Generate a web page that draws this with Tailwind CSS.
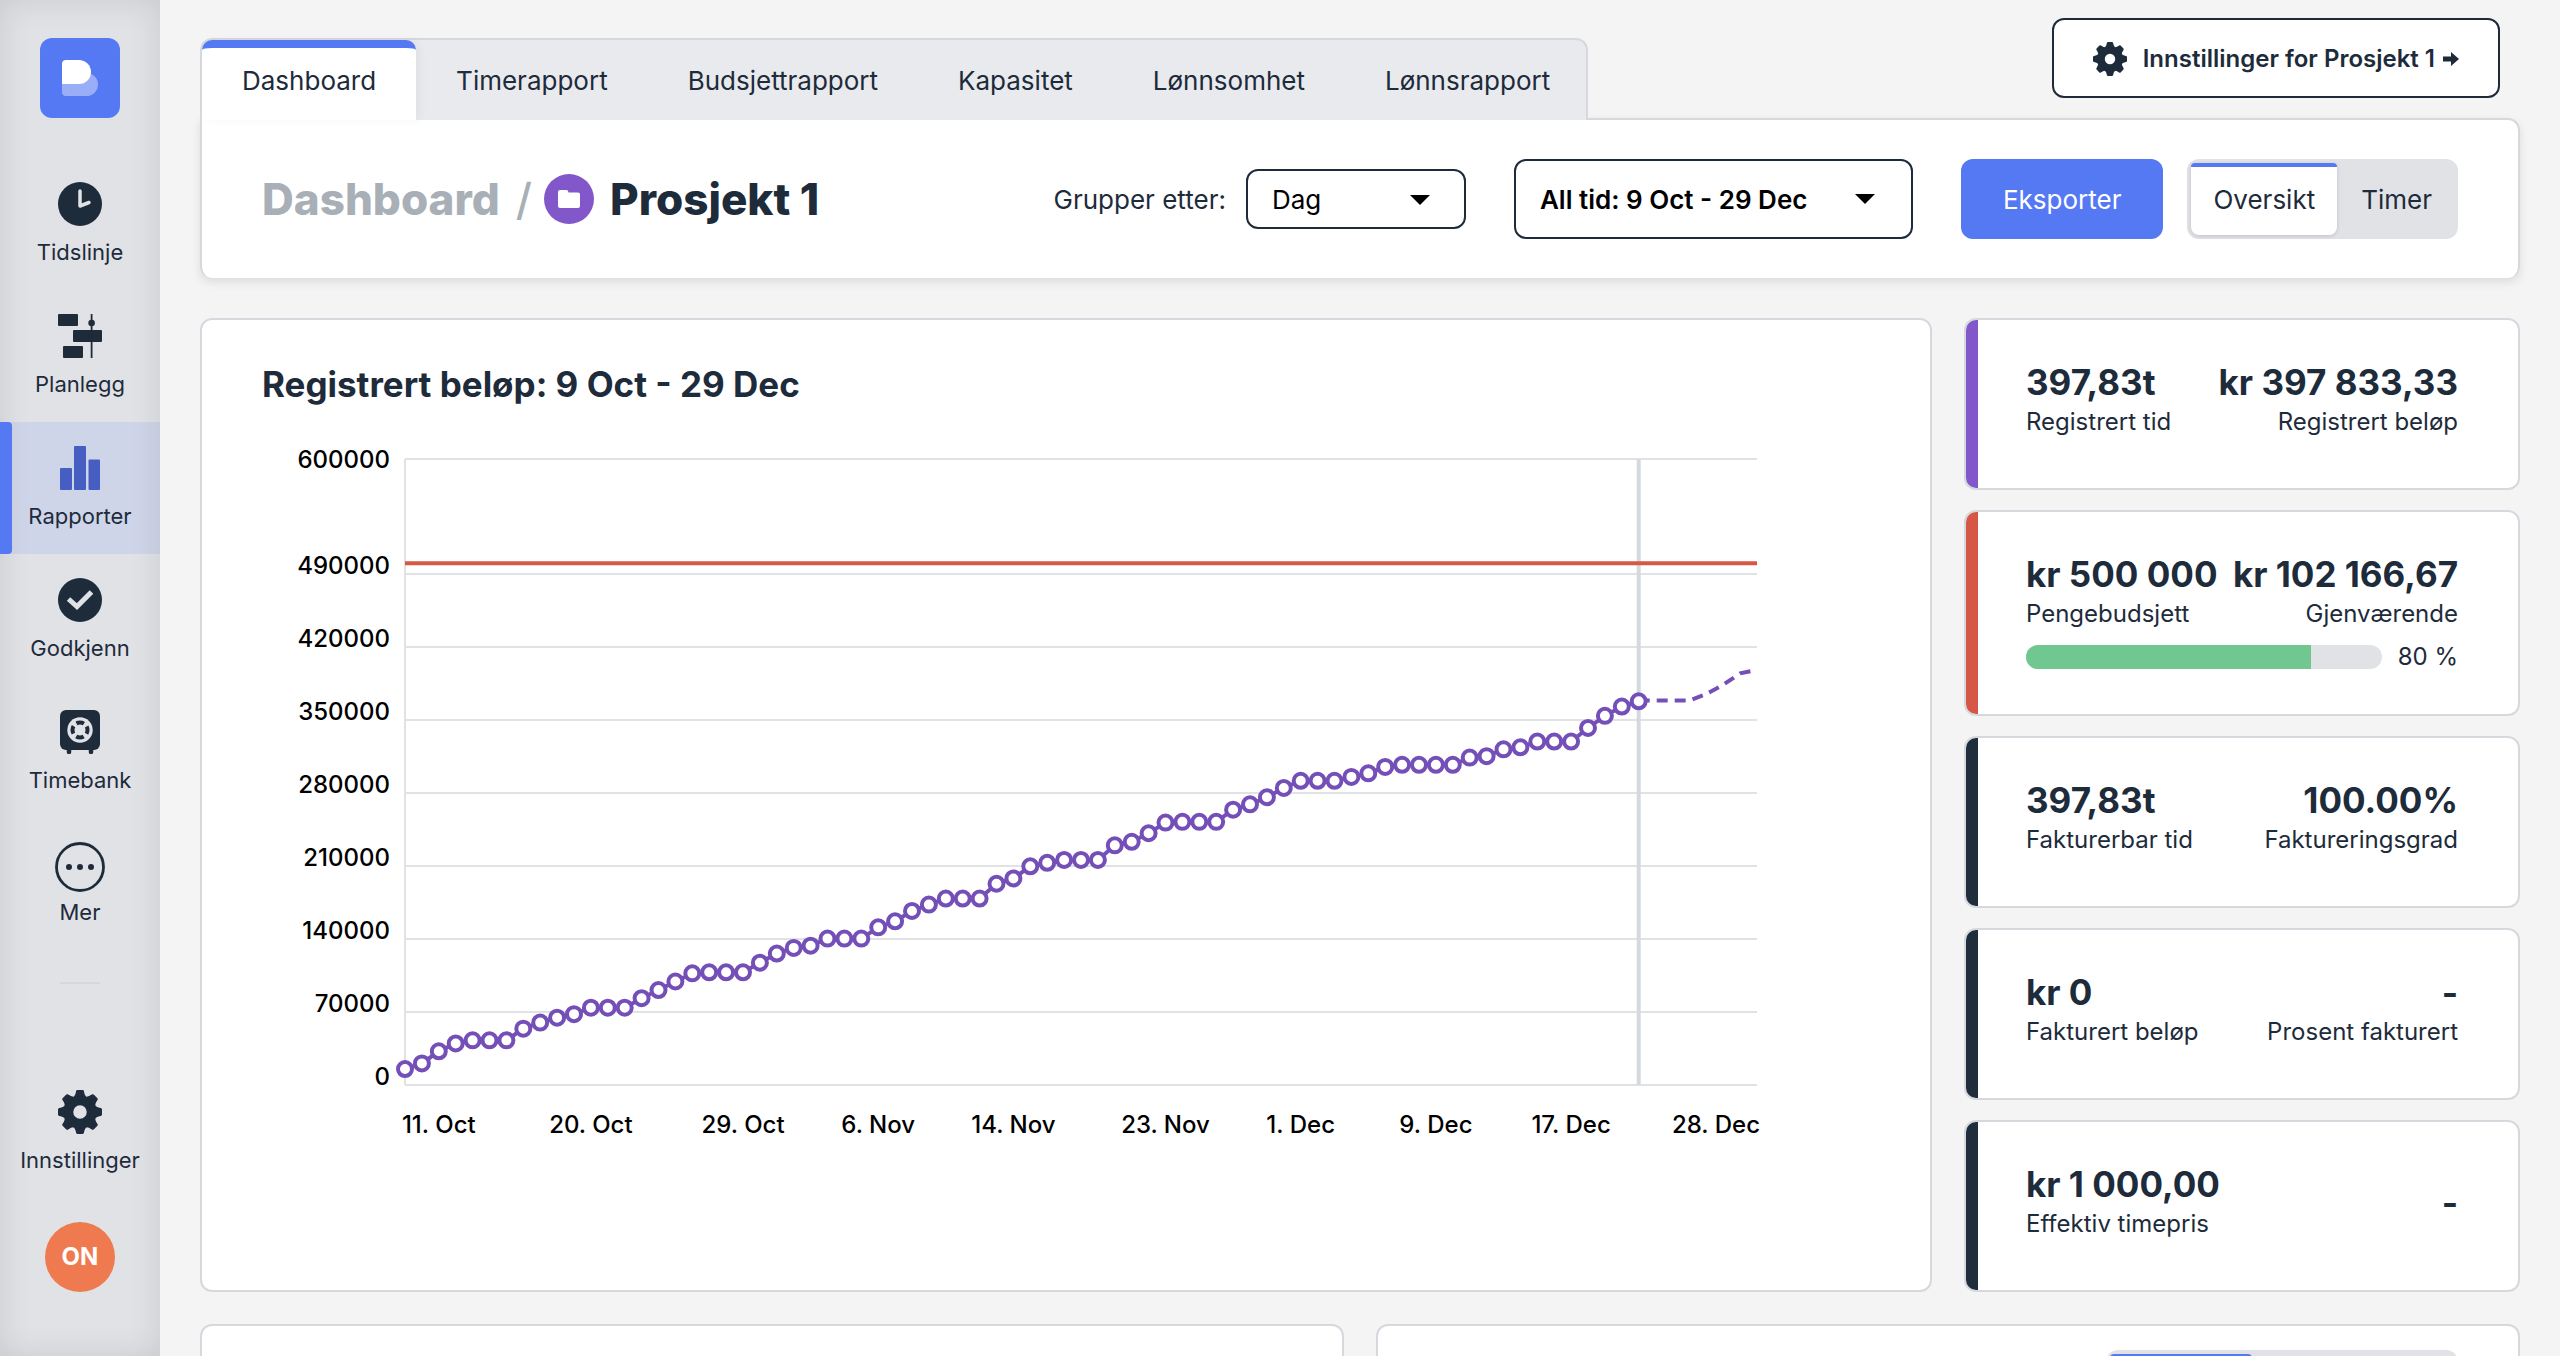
<!DOCTYPE html>
<html lang="no">
<head>
<meta charset="utf-8">
<meta name="viewport" content="width=device-width, initial-scale=1">
<title>Dashboard / Prosjekt 1</title>
<script src="https://cdn.jsdelivr.net/npm/@tailwindcss/browser@4"></script>
</head>
<body class="flex h-screen overflow-hidden bg-[#f4f4f4] font-['Inter',sans-serif] text-[26px] text-[#1d2b3b]">

<!-- Shared gear shape -->
<svg class="hidden" aria-hidden="true">
  <symbol id="gear" viewBox="-22 -22 44 44">
    <circle r="11.5" fill="none" stroke="currentColor" stroke-width="9.5"/>
    <g fill="currentColor">
      <path id="tooth" d="M-2.6-22H2.6Q3.8-22 4-20.6Q4.6-16 7.5-14.5H-7.5Q-4.6-16-4-20.6Q-3.8-22-2.6-22Z"/>
      <use href="#tooth" transform="rotate(45)"/><use href="#tooth" transform="rotate(90)"/><use href="#tooth" transform="rotate(135)"/>
      <use href="#tooth" transform="rotate(180)"/><use href="#tooth" transform="rotate(225)"/><use href="#tooth" transform="rotate(270)"/><use href="#tooth" transform="rotate(315)"/>
    </g>
  </symbol>
</svg>

<nav class="flex w-40 shrink-0 flex-col items-center bg-[#e1e2e6] pt-[38px] pb-16 text-[22px] shadow-[inset_0_0_32px_rgba(0,0,0,0.11)]" aria-label="Hovedmeny">
  <a href="#" aria-label="Hjem" class="mb-10 block size-20 shrink-0">
    <svg viewBox="0 0 80 80" class="size-20">
      <rect width="80" height="80" rx="12" fill="#5578f3"/>
      <path d="M22 35H46.500A11.500 11.500 0 0 1 46.500 58H26Q22 58 22 54Z" fill="#9aaef8"/>
      <path d="M26 22H39A12 12 0 0 1 39 46H22V26Q22 22 26 22Z" fill="#fff"/>
    </svg>
  </a>
  <a href="#" class="flex h-[132px] w-full flex-col items-center pt-6">
    <span class="h-[50px]"><svg viewBox="0 0 44 44" class="size-11"><circle cx="22" cy="22" r="22" fill="#1d2b3b"/><path d="M22 9V24L31 20.500" fill="none" stroke="#e1e2e6" stroke-width="3.500" stroke-linecap="round" stroke-linejoin="round"/></svg></span>
    <span class="leading-10">Tidslinje</span>
  </a>
  <a href="#" class="flex h-[132px] w-full flex-col items-center pt-6">
    <span class="h-[50px]"><svg viewBox="0 0 44 44" class="size-11" fill="#1d2b3b"><rect width="20" height="12" rx="1"/><rect x="15" y="16" width="29" height="12" rx="1"/><rect x="5" y="32" width="20" height="12" rx="1"/><rect x="32.700" width="1.800" height="44"/><circle cx="33.600" cy="9" r="3.300"/></svg></span>
    <span class="leading-10">Planlegg</span>
  </a>
  <a href="#" aria-current="page" class="relative flex h-[132px] w-full flex-col items-center bg-[#5578f3]/12 pt-6">
    <span class="absolute inset-y-0 left-0 w-3 rounded-r bg-[#5578f3]"></span>
    <span class="h-[50px]"><svg viewBox="0 0 44 44" class="size-11" fill="#465ec2"><rect x="2" y="22" width="12" height="22" rx="1"/><rect x="16" width="12" height="44" rx="1"/><rect x="30.500" y="13.500" width="11.500" height="30.500" rx="1"/></svg></span>
    <span class="leading-10">Rapporter</span>
  </a>
  <a href="#" class="flex h-[132px] w-full flex-col items-center pt-6">
    <span class="h-[50px]"><svg viewBox="0 0 44 44" class="size-11"><circle cx="22" cy="22" r="22" fill="#1d2b3b"/><path d="M10.500 21L19 28.500L33.500 14" fill="none" stroke="#e1e2e6" stroke-width="5"/></svg></span>
    <span class="leading-10">Godkjenn</span>
  </a>
  <a href="#" class="flex h-[132px] w-full flex-col items-center pt-6">
    <span class="h-[50px]"><svg viewBox="0 0 44 44" class="size-11"><rect x="2" width="40" height="40" rx="6" fill="#1d2b3b"/><path d="M11 38V42M33 38V42" stroke="#1d2b3b" stroke-width="4.500" stroke-linecap="round"/><circle cx="22" cy="20" r="12.700" fill="#e1e2e6"/><circle cx="22" cy="20" r="7.500" fill="none" stroke="#1d2b3b" stroke-width="4" stroke-dasharray="7.800 3.980" stroke-dashoffset="3.900"/></svg></span>
    <span class="leading-10">Timebank</span>
  </a>
  <a href="#" class="flex h-[132px] w-full flex-col items-center pt-6">
    <span class="h-[50px]"><svg viewBox="0 0 50 50" class="size-[50px]" fill="#1d2b3b"><circle cx="25" cy="25" r="23.500" fill="none" stroke="#1d2b3b" stroke-width="2.800"/><circle cx="14" cy="25" r="3"/><circle cx="25" cy="25" r="3"/><circle cx="36" cy="25" r="3"/></svg></span>
    <span class="leading-10">Mer</span>
  </a>
  <hr class="mt-8 w-10 border-t-2 border-[#d5d8dd]">
  <a href="#" class="mt-auto flex h-[132px] w-full flex-col items-center pt-6">
    <span class="h-[50px]"><svg class="size-11"><use href="#gear"/></svg></span>
    <span class="leading-10">Innstillinger</span>
  </a>
  <button type="button" class="mt-6 size-[70px] shrink-0 rounded-full bg-[#ef7a50] text-2xl font-bold text-white">ON</button>
</nav>

<main class="min-w-0 flex-1 px-10">
  <div class="flex h-[118px] items-end justify-between">
    <div class="relative z-10 -mb-0.5 flex h-[82px] rounded-t-xl border-2 border-b-0 border-[#d5d9de] bg-[#e9eaed]">
      <a href="#" aria-current="page" class="flex items-center rounded-t-[10px] border-t-8 border-[#5578f3] bg-white px-10 pb-2 shadow-[4px_0_8px_rgba(0,0,0,0.04)]">Dashboard</a>
      <a href="#" class="flex items-center px-10">Timerapport</a>
      <a href="#" class="flex items-center px-10">Budsjettrapport</a>
      <a href="#" class="flex items-center px-10">Kapasitet</a>
      <a href="#" class="flex items-center px-10">Lønnsomhet</a>
      <a href="#" class="flex items-center pr-9 pl-10">Lønnsrapport</a>
    </div>
    <button type="button" class="mr-5 mb-5 flex h-20 items-center rounded-xl border-2 border-[#1d2b3b] bg-white px-[39px] pt-0.5 text-2xl font-semibold">
      <svg class="mr-4 size-[34px]"><use href="#gear"/></svg>
      Innstillinger for Prosjekt 1
      <svg viewBox="0 0 16 14" class="ml-2 h-3.5 w-4" fill="#1d2b3b"><path d="M0 4.500H8V0L16 7L8 14V9.500H0Z"/></svg>
    </button>
  </div>

  <header class="flex h-40 items-center justify-between rounded-b-xl rounded-tr-xl border-2 border-b-0 border-[#d5d9de] bg-white px-[60px] shadow-[0_4px_10px_rgba(0,0,0,0.1)]">
    <h1 class="flex items-center text-[44px] font-extrabold">
      <a href="#" class="text-[#a9afb7]">Dashboard</a>
      <span class="mr-3 ml-4 font-medium text-[#a9afb7]">/</span>
      <svg viewBox="0 0 50 50" class="mr-4 size-[50px]"><circle cx="25" cy="25" r="25" fill="#8257c9"/><path d="M16 16H22.500Q23.500 16 24 17L24.500 18.500H34Q36 18.500 36 20.500V32Q36 34 34 34H16Q14 34 14 32V18Q14 16 16 16Z" fill="#fff"/></svg>
      Prosjekt 1
    </h1>
    <div class="flex items-center">
      <label for="group" class="mr-5">Grupper etter:</label>
      <div class="relative mr-12">
        <select id="group" class="h-[60px] w-[220px] appearance-none rounded-xl border-2 border-[#1d2b3b] bg-white pl-6 text-black"><option>Dag</option><option>Uke</option><option>Måned</option></select>
        <svg viewBox="0 0 20 10" class="pointer-events-none absolute top-[26px] right-9 h-2.5 w-5"><path d="M0 0H20L10 10Z"/></svg>
      </div>
      <button type="button" class="mr-12 flex h-20 w-[399px] items-center justify-between rounded-xl border-2 border-[#1d2b3b] pr-9 pl-6 font-semibold text-black">
        All tid: 9 Oct - 29 Dec
        <svg viewBox="0 0 20 10" class="h-2.5 w-5"><path d="M0 0H20L10 10Z"/></svg>
      </button>
      <button type="button" class="mr-6 h-20 rounded-xl bg-[#5578f3] px-[42px] text-white">Eksporter</button>
      <div class="flex h-20 rounded-xl bg-[#e1e2e6] p-1">
        <button type="button" aria-pressed="true" class="rounded-t-sm rounded-b-lg border-t-4 border-[#5578f3] bg-white px-[22px] pb-1 shadow-[0_1px_4px_rgba(0,0,0,0.14)]">Oversikt</button>
        <button type="button" aria-pressed="false" class="pr-[22px] pl-6">Timer</button>
      </div>
    </div>
  </header>

  <div class="mt-10 grid grid-cols-[minmax(0,1fr)_556px] gap-8">
    <section class="rounded-xl border-2 border-[#d5d9de] bg-white px-[60px] pt-[42px]">
      <h2 class="text-[35px] leading-[44px] font-bold">Registrert beløp: 9 Oct - 29 Dec</h2>
      <svg id="chart" viewBox="0 0 1608 760" class="h-auto w-full overflow-visible text-2xl font-medium" role="img" aria-label="Registrert beløp per dag"></svg>
    </section>

    <div class="flex flex-col gap-5">
      <section class="relative overflow-hidden rounded-xl border-2 border-[#d5d9de] bg-white pt-10 pr-[60px] pb-12 pl-[60px]">
        <span class="absolute inset-y-0 left-0 w-3 bg-[#8257c9]"></span>
        <dl class="flex items-center justify-between text-2xl leading-9">
          <div class="flex flex-col-reverse"><dt>Registrert tid</dt><dd class="text-[35px] leading-[44px] font-bold">397,83t</dd></div>
          <div class="flex flex-col-reverse text-right"><dt>Registrert beløp</dt><dd class="text-[35px] leading-[44px] font-bold">kr 397 833,33</dd></div>
        </dl>
      </section>
      <section class="relative overflow-hidden rounded-xl border-2 border-[#d5d9de] bg-white pt-10 pr-[60px] pb-10 pl-[60px]">
        <span class="absolute inset-y-0 left-0 w-3 bg-[#d65745]"></span>
        <dl class="flex items-center justify-between text-2xl leading-9">
          <div class="flex flex-col-reverse"><dt>Pengebudsjett</dt><dd class="text-[35px] leading-[44px] font-bold">kr 500 000</dd></div>
          <div class="flex flex-col-reverse text-right"><dt>Gjenværende</dt><dd class="text-[35px] leading-[44px] font-bold">kr 102 166,67</dd></div>
        </dl>
        <div class="mt-2 flex h-[34px] items-center gap-4 text-2xl">
          <div role="progressbar" aria-valuenow="80" aria-valuemin="0" aria-valuemax="100" aria-label="Brukt budsjett" class="h-6 flex-1 overflow-hidden rounded-full bg-[#e1e2e6]"><div class="h-full bg-[#70c78f]" style="width:80%"></div></div>
          80 %
        </div>
      </section>
      <section class="relative overflow-hidden rounded-xl border-2 border-[#d5d9de] bg-white pt-10 pr-[60px] pb-12 pl-[60px]">
        <span class="absolute inset-y-0 left-0 w-3 bg-[#1f2d3d]"></span>
        <dl class="flex items-center justify-between text-2xl leading-9">
          <div class="flex flex-col-reverse"><dt>Fakturerbar tid</dt><dd class="text-[35px] leading-[44px] font-bold">397,83t</dd></div>
          <div class="flex flex-col-reverse text-right"><dt>Faktureringsgrad</dt><dd class="text-[35px] leading-[44px] font-bold">100.00%</dd></div>
        </dl>
      </section>
      <section class="relative overflow-hidden rounded-xl border-2 border-[#d5d9de] bg-white pt-10 pr-[60px] pb-12 pl-[60px]">
        <span class="absolute inset-y-0 left-0 w-3 bg-[#1f2d3d]"></span>
        <dl class="flex items-center justify-between text-2xl leading-9">
          <div class="flex flex-col-reverse"><dt>Fakturert beløp</dt><dd class="text-[35px] leading-[44px] font-bold">kr 0</dd></div>
          <div class="flex flex-col-reverse text-right"><dt>Prosent fakturert</dt><dd class="text-[35px] leading-[44px] font-bold">-</dd></div>
        </dl>
      </section>
      <section class="relative overflow-hidden rounded-xl border-2 border-[#d5d9de] bg-white pt-10 pr-[60px] pb-12 pl-[60px]">
        <span class="absolute inset-y-0 left-0 w-3 bg-[#1f2d3d]"></span>
        <dl class="flex items-center justify-between text-2xl leading-9">
          <div class="flex flex-col-reverse"><dt>Effektiv timepris</dt><dd class="text-[35px] leading-[44px] font-bold">kr 1 000,00</dd></div>
          <div><dd class="text-[35px] leading-[44px] font-bold">-</dd></div>
        </dl>
      </section>
    </div>
  </div>

  <div class="mt-8 grid grid-cols-2 gap-8">
    <section class="h-80 rounded-xl border-2 border-[#d5d9de] bg-white"></section>
    <section class="flex h-80 items-start justify-end rounded-xl border-2 border-[#d5d9de] bg-white px-[60px] pt-6">
      <div class="flex h-20 w-[352px] rounded-xl bg-[#e1e2e6] p-1">
        <div class="w-[142px] rounded-t-sm rounded-b-lg border-t-4 border-[#5578f3] bg-white"></div>
      </div>
    </section>
  </div>
</main>

<script>
  // Accumulated amount per day, in thousands of kroner
  const actual = [15.3,20.7,32.3,39.8,42.8,42.8,42.8,54,59.8,64.5,67.9,74.1,74.1,74.1,83.2,91,99.2,107,108,108,108,117.2,126,131.4,133.5,140.3,140.3,140.3,151.1,156.9,166.8,172.9,178.7,178.7,178.7,192.9,198,209.6,213,215.7,215.7,215.7,229.7,233.1,241.3,251.5,252.2,252.2,252.2,263.9,269,275.8,284.7,291.6,291.6,291.6,295.3,298.7,304.9,306.9,306.9,306.9,306.9,313.8,315.2,321.7,323.7,329.2,329.2,329.2,342.2,353.8,362.7,367.8];
  const planned = [368.5,368.5,368.5,368.5,374.7,383.6,394.5,398];
  const dates = [['11. Oct',2],['20. Oct',11],['29. Oct',20],['6. Nov',28],['14. Nov',36],['23. Nov',45],['1. Dec',53],['9. Dec',61],['17. Dec',69]];
  const left = 143, right = 1495, bottom = 679, top_ = 53;
  const x = i => left + i * (right - left) / 80;
  const y = v => bottom - v * (bottom - top_) / 600;
  const line = (vals, from) => vals.map((v, i) => x(i + from) + ',' + y(v)).join(' ');
  let s = '';
  for (const v of [0, 70, 140, 210, 280, 350, 420, 490, 600]) {
    const ly = Math.round(y(v));
    s += `<path d="M${left} ${ly}H${right}" stroke="#e1e2e6" stroke-width="2"/>`;
    s += `<text x="128" y="${v === 600 ? ly + 9 : ly}" text-anchor="end" fill="#000">${v * 1000}</text>`;
  }
  s += `<path d="M${left} ${top_}V${bottom}" stroke="#e1e2e6" stroke-width="2"/>`;
  s += `<path d="M${x(73)} ${top_}V${bottom}" stroke="#d5d9de" stroke-width="4"/>`;
  s += `<path d="M${left} ${y(500)}H${right}" stroke="#d65745" stroke-width="4"/>`;
  s += `<polyline points="${line(planned, 73)}" fill="none" stroke="#744fb8" stroke-width="4" stroke-dasharray="11 7"/>`;
  s += `<polyline points="${line(actual, 0)}" fill="none" stroke="#744fb8" stroke-width="4"/>`;
  actual.forEach((v, i) => { s += `<circle cx="${x(i)}" cy="${y(v)}" r="7" fill="#fff" stroke="#744fb8" stroke-width="4"/>`; });
  for (const [t, i] of dates) s += `<text x="${x(i)}" y="727" text-anchor="middle" fill="#000">${t}</text>`;
  s += `<text x="${right + 3}" y="727" text-anchor="end" fill="#000">28. Dec</text>`;
  document.getElementById('chart').innerHTML = s;
</script>
</body>
</html>
